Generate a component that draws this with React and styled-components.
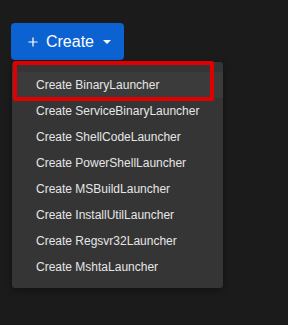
import React from "react";
import styled, { createGlobalStyle } from "styled-components";

const items = [
  "Create BinaryLauncher",
  "Create ServiceBinaryLauncher",
  "Create ShellCodeLauncher",
  "Create PowerShellLauncher",
  "Create MSBuildLauncher",
  "Create InstallUtilLauncher",
  "Create Regsvr32Launcher",
  "Create MshtaLauncher",
];

const App = () => {
  return (
    <>
      <GlobalStyle />
      <Page>
        <Dropdown>
          <CreateButton type="button">
            <svg width="12" height="12" viewBox="0 0 12 12">
              <path d="M6 0.5V11.5M0.5 6H11.5" stroke="#fff" strokeWidth="1.5" />
            </svg>
            <span>Create</span>
            <Caret />
          </CreateButton>
          <Menu>
            <Highlight />
            {items.map((label, i) => (
              <Item key={label} $active={i === 0}>
                {label}
              </Item>
            ))}
          </Menu>
        </Dropdown>
      </Page>
    </>
  );
};

export default App;

const GlobalStyle = createGlobalStyle`
  html, body {
    margin: 0;
    background: #1b1b1b;
  }
  body {
    font-family: "Liberation Sans", Arial, sans-serif;
  }
`;

// 전체 화면
const Page = styled.div`
  width: 288px;
  height: 325px;
  box-sizing: border-box;
  padding: 23px 0 0 11px;
  background: #1b1b1b;
`;

const Dropdown = styled.div`
  display: flex;
  flex-direction: column;
  align-items: flex-start;
`;

// 파란 버튼
const CreateButton = styled.button`
  display: flex;
  align-items: center;
  gap: 8px;
  height: 37px;
  width: 113px;
  box-sizing: border-box;
  padding: 0 13px 0 17px;
  border: none;
  border-radius: 4px;
  background: #0b62d0;
  color: #fff;
  font-family: "Liberation Sans", Arial, sans-serif;
  font-size: 16px;

  span {
    margin-right: 1px;
  }
`;

const Caret = styled.i`
  width: 0;
  height: 0;
  border-left: 4px solid transparent;
  border-right: 4px solid transparent;
  border-top: 4px solid #fff;
  margin-top: 1px;
`;

// 드롭다운 메뉴
const Menu = styled.div`
  position: relative;
  margin: 2px 0 0 1px;
  width: 211px;
  box-sizing: border-box;
  padding: 10px 0 8px;
  background: #353535;
  border-radius: 3px;
  box-shadow: 0 2px 6px rgba(0, 0, 0, 0.35);
`;

const Item = styled.div`
  height: 26px;
  display: flex;
  align-items: center;
  padding-left: 24px;
  font-size: 12px;
  color: #e6e6e6;
  background: ${(p) => (p.$active ? "#3b3b3b" : "transparent")};
`;

// 빨간 강조 박스
const Highlight = styled.div`
  position: absolute;
  left: 1px;
  top: -1px;
  width: 201px;
  height: 40px;
  box-sizing: border-box;
  border: 4px solid #e00000;
  border-radius: 2px;
  pointer-events: none;
  z-index: 1;
`;
